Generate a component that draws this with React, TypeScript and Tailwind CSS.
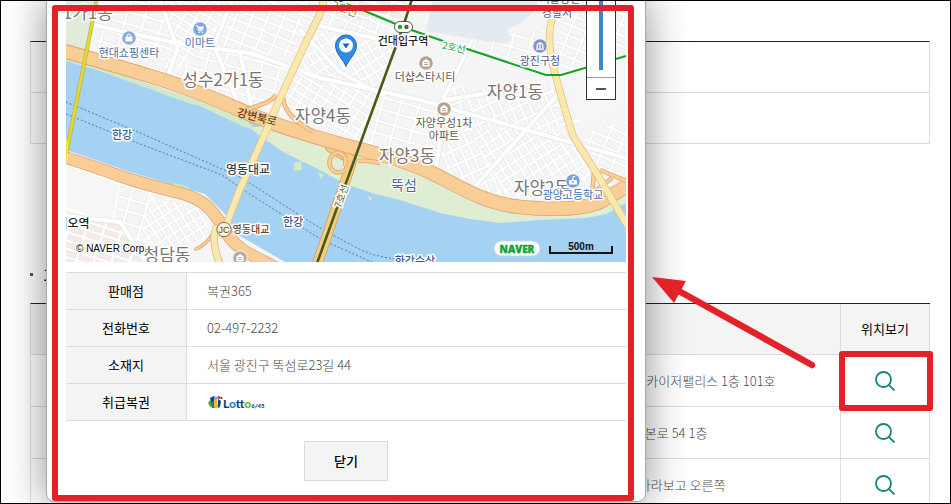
import type { ReactNode } from "react";

const sans = "font-['Noto_Sans_CJK_KR','Noto_Sans',sans-serif]";

type LabelProps = {
  x: number;
  y: number;
  size: number;
  children: ReactNode;
  className?: string;
  weight?: number;
  halo?: number;
  transform?: string;
};

function MapLabel({ x, y, size, children, className = "fill-[#5f5a58]", weight = 400, halo = 3, transform }: LabelProps) {
  return (
    <text
      x={x}
      y={y}
      fontSize={size}
      fontWeight={weight}
      textAnchor="middle"
      stroke="#fff"
      strokeWidth={halo}
      strokeLinejoin="round"
      paintOrder="stroke"
      transform={transform}
      className={className}
    >
      {children}
    </text>
  );
}

function Streets({ id, angle, w, h, tint = "#f5f5f5" }: { id: string; angle: number; w: number; h: number; tint?: string }) {
  return (
    <pattern id={id} width={w} height={h} patternUnits="userSpaceOnUse" patternTransform={`rotate(${angle})`}>
      <rect width={w} height={h} fill="#fff" />
      <rect x="1.5" y="1.5" width={w - 3} height={h - 3} fill={tint} stroke="#e8e8e8" strokeWidth="0.7" />
    </pattern>
  );
}

function Road({ d, width, fill, edge }: { d: string; width: number; fill: string; edge: string }) {
  return (
    <g fill="none" strokeLinecap="round" strokeLinejoin="round">
      <path d={d} stroke={edge} strokeWidth={width + 1.5} />
      <path d={d} stroke={fill} strokeWidth={width} />
    </g>
  );
}

function Poi({ x, y, color, kind }: { x: number; y: number; color: string; kind: "bag" | "cart" | "home" | "hall" | "school" }) {
  return (
    <g transform={`translate(${x} ${y})`}>
      <circle r="7.5" fill="#fff" />
      <circle r="6.8" fill={color} />
      {kind === "bag" && (
        <>
          <rect x="-3.5" y="-1.5" width="7" height="5" rx="0.6" fill="#fff" />
          <path d="M-1.8-1.5v-.6a1.8 1.8 0 0 1 3.6 0v.6" fill="none" stroke="#fff" />
        </>
      )}
      {kind === "cart" && (
        <>
          <path d="M-4.2-3.4h1.6l1.2 5.2h4.2" fill="none" stroke="#fff" />
          <path d="M-2-2.4h6l-.9 3.1h-4.4z" fill="#fff" />
          <circle cx="-.7" cy="3.5" r=".8" fill="#fff" />
          <circle cx="2.4" cy="3.5" r=".8" fill="#fff" />
        </>
      )}
      {kind === "home" && (
        <>
          <path d="M-3.6 3.6v-5.2l3.6-2.4 3.6 2.4v5.2z" fill="#fff" />
          <path d="M-1.8-.4h3.6M-1.8 1.5h3.6" stroke={color} />
        </>
      )}
      {kind === "hall" && (
        <>
          <path d="M-4-1.6l4-2.4 4 2.4zM-4 2.4h8v1.3h-8z" fill="#fff" />
          <path d="M-2.8-1.2v3.6M0-1.2v3.6M2.8-1.2v3.6" stroke="#fff" strokeWidth="1.3" />
        </>
      )}
      {kind === "school" && (
        <>
          <path d="M-4 3.6v-4.4h2.6l1.4-1.4 1.4 1.4h2.6v4.4z" fill="#fff" />
          <path d="M0-2v-2.5h2.2" fill="none" stroke="#fff" />
          <circle cy="1" r="1" fill={color} />
        </>
      )}
    </g>
  );
}

const northHighway =
  "M60 50C90 58 120 67 150 76S220 101 245 112S300 133 340 144S410 161 440 177S490 204 520 207S580 210 600 202L632 183";
const southHighway = "M60 156C85 163 100 169 120 176S160 188 180 193S212 207 224 229S255 256 280 270";
const yeongdong = "M325 -5L320 14L306 42L277 105L264 136L240 189L225 228";
const eastRoad = "M553 -4L552 18C548 34 549 46 553 66C560 92 566 114 573 136L597 174L630 230";

function StreetMap() {
  return (
    <svg
      viewBox="66 0 560 262"
      preserveAspectRatio="xMidYMid slice"
      role="img"
      aria-label="판매점 위치 지도"
      className="block h-[262px] w-full"
    >
      <defs>
        <Streets id="st-a" angle={22} w={15} h={10} />
        <Streets id="st-b" angle={-24} w={9} h={14} />
        <Streets id="st-c" angle={32} w={11} h={8} />
        <Streets id="st-d" angle={58} w={10} h={8} />
        <Streets id="st-e" angle={16} w={18} h={12} />
        <Streets id="st-p" angle={18} w={17} h={8} tint="#f7e9e4" />
      </defs>

      <rect x="66" width="560" height="262" fill="#f5f5f5" />

      <g>
        <path d="M96 0h60l14 34-6 46-74-24z" fill="url(#st-e)" />
        <path d="M156 0h76l-10 40-58 38 6-44z" fill="url(#st-c)" />
        <path d="M232 0h88l-24 58-80-12z" fill="url(#st-a)" />
        <path d="M164 80l50-36 80 18-26 46-24 2z" fill="url(#st-e)" />
        <path d="M322 0h92l-16 44-90-14z" fill="url(#st-a)" />
        <path d="M350 0h58l-8 20-60 0z" fill="url(#st-p)" />
        <path d="M306 32l92 12-14 44-96-24z" fill="url(#st-d)" />
        <path d="M288 64l96 24-22 54-84-32z" fill="url(#st-c)" />
        <path d="M380 94l62 14-8 54-66-18z" fill="url(#st-e)" />
        <path d="M442 86l108-2 20 46-58 74-70-30z" fill="url(#st-b)" />
        <path d="M470 130l100 0 20 46-30 28-50-2z" fill="url(#st-d)" />
        <path d="M455 36l95-6v44l-60-16z" fill="url(#st-e)" />
        <path d="M556 0h70v52l-68 20z" fill="url(#st-a)" />
        <path d="M582 134l44-14v54l-20 4z" fill="url(#st-a)" />
        <path d="M66 164l54 20-8 40-46-16z" fill="#f6f6f6" stroke="#fff" strokeWidth="2" />
        <path d="M120 184l74 22-10 34-30 22h-22l-16-40z" fill="url(#st-e)" />
        <path d="M150 196l52 14 8 24-30 20-40-16z" fill="url(#st-d)" />
        <path d="M66 214l60 12 22 36h-82z" fill="url(#st-p)" />
      </g>

      <g fill="none" stroke="#e6e6e6" strokeWidth="5.5">
        <path d="M94 25L180 44L250 53L320 78L420 100L626 158" />
        <path d="M240 52L252 110M180 40L166 82M160 0L178 50M232 0L214 46L240 108" />
        <path d="M300 30L340 72L384 96M320 26L400 44M440 106L472 40M436 168L446 100L540 84" />
        <path d="M560 125L626 108M470 192L560 92M66 216L120 222L146 262" />
      </g>
      <g fill="none" stroke="#fff" strokeWidth="4">
        <path d="M94 25L180 44L250 53L320 78L420 100L626 158" />
        <path d="M240 52L252 110M180 40L166 82M160 0L178 50M232 0L214 46L240 108" />
        <path d="M300 30L340 72L384 96M320 26L400 44M440 106L472 40M436 168L446 100L540 84" />
        <path d="M560 125L626 108M470 192L560 92M66 216L120 222L146 262" />
      </g>

      <path d="M566 74L626 62v48l-46 16z" fill="#f6f6f6" />
      <path d="M433 0L426 31L455 36L505 44L512 38L507 30L522 22L536 10L538 0z" fill="#e4eaf1" />
      <path d="M66 0h29l-9 56-20-6z" fill="#e0ecd9" />

      <path
        d="M66 58L100 68L190 98L245 120L262 126L340 150L440 184L510 214L590 212L626 196V262H285L240 236L224 213L205 194L170 184L130 172L90 158L66 150z"
        fill="#a5d1f2"
      />
      <path
        d="M262 126L340 150L440 182L510 212L590 210L626 192V203L606 214L586 218L540 220L500 223L470 219L440 213L400 200L375 194L345 184L318 169L285 153L263 138L250 128z"
        fill="#dfedd3"
      />
      <path
        d="M66 58L100 68L190 98L245 120L258 130L244 127L200 106L188 103L100 71L66 61zM174 183l8 2 8 3 0 3-18-5zM294 163l7-2 1 9-8 1zM318 172l6 3-4 4zM368 196l4 2-2 4zM283 152l5-1 1 4z"
        fill="#d3e8c8"
      />

      <g fill="none" stroke="#55799f" strokeWidth="1" strokeDasharray="2 2">
        <path d="M66 102L145 135L240 177L320 228L355 247Q376 258 400 259" />
        <path d="M66 114L135 142L222 175L245 191L322 240L372 262" />
      </g>

      <Road d="M330 147L352 160L347 176L316 268" width={9} fill="#f3cd83" edge="#d79e5b" />
      <Road d={northHighway} width={13} fill="#f9cd96" edge="#dfa267" />
      <g fill="none" stroke="#dfa267" strokeWidth="4.5">
        <path d="M276 95C270 104 258 105 246 110M283 98C284 112 296 122 312 131" />
        <path d="M345 170C334 178 326 165 331 157S348 153 345 166" />
        <path d="M358 161Q366 160 380 163" />
        <path d="M594 172L592 196M600 170L626 181M594 192L612 178" />
      </g>
      <g fill="none" stroke="#f9cd96" strokeWidth="3">
        <path d="M276 95C270 104 258 105 246 110M283 98C284 112 296 122 312 131" />
        <path d="M345 170C334 178 326 165 331 157S348 153 345 166" />
        <path d="M358 161Q366 160 380 163" />
        <path d="M594 172L592 196M600 170L626 181M594 192L612 178" />
      </g>
      <Road d="M196 249Q212 242 218 222" width={2} fill="#f9cd96" edge="#dfa267" />
      <Road d={southHighway} width={11} fill="#f9cd96" edge="#dfa267" />
      <Road d="M216 228C212 240 214 252 222 268" width={6} fill="#fae8ae" edge="#dcbc77" />
      <Road d={yeongdong} width={6} fill="#fbe8ac" edge="#e0c283" />
      <Road d={eastRoad} width={6} fill="#fbe8ac" edge="#e0c283" />

      <path d="M97 -2L86 54L66 155" fill="none" stroke="#b9bd47" strokeWidth="4" />
      <path d="M97 -2L86 54L66 155" fill="none" stroke="#e9d735" strokeWidth="2.4" />
      <path d="M66 140v20" stroke="#f3e63a" strokeWidth="4" />
      <path d="M413 -4L403 27L363 136L316 266" fill="none" stroke="#495b16" strokeWidth="2.6" />
      <path d="M330 -2L360 9L403 27L440 40L546 75H561L626 56" fill="none" stroke="#13a326" strokeWidth="2" />

      <Poi x={129} y={38} color="#8cabdb" kind="bag" />
      <Poi x={200} y={29} color="#7ea6de" kind="cart" />
      <Poi x={426} y={63} color="#b5a18d" kind="home" />
      <Poi x={444} y={109} color="#b5a18d" kind="home" />
      <Poi x={540} y={46} color="#8593c5" kind="hall" />
      <Poi x={240} y={258} color="#b5aaa2" kind="home" />

      <g className={sans}>
        <MapLabel x={80} y={19} size={17} className="fill-[#7b7472]">수1가1동</MapLabel>
        <MapLabel x={129} y={57} size={11} className="fill-[#4d6d9d]">현대쇼핑센타</MapLabel>
        <MapLabel x={200} y={47} size={11} className="fill-[#4d73aa]">이마트</MapLabel>
        <MapLabel x={223} y={86} size={17} className="fill-[#7b7472]">성수2가1동</MapLabel>
        <MapLabel x={323} y={122} size={17} className="fill-[#7b7472]">자양4동</MapLabel>
        <MapLabel x={407} y={162} size={17} className="fill-[#7b7472]">자양3동</MapLabel>
        <MapLabel x={515} y={98} size={17} className="fill-[#7b7472]">자양1동</MapLabel>
        <MapLabel x={542} y={194} size={17} className="fill-[#7b7472]">자양2동</MapLabel>
        <MapLabel x={167} y={261} size={17} className="fill-[#7b7472]">청담동</MapLabel>
        <Poi x={573} y={181} color="#75a5dc" kind="school" />
        <MapLabel x={573} y={199} size={11} className="fill-[#3d6eae]">광양고등학교</MapLabel>
        <MapLabel x={540} y={65} size={11} className="fill-[#4e5987]">광진구청</MapLabel>
        <MapLabel x={560} y={3} size={11} className="fill-[#4e5987]">서울광진</MapLabel>
        <MapLabel x={557} y={17} size={11} className="fill-[#4e5987]">경찰서</MapLabel>
        <MapLabel x={425} y={81} size={11} className="fill-[#65564c]">더샵스타시티</MapLabel>
        <MapLabel x={444} y={127} size={11} className="fill-[#65564c]">자양우성1차</MapLabel>
        <MapLabel x={444} y={140} size={11} className="fill-[#65564c]">아파트</MapLabel>
        <MapLabel x={403} y={45} size={11} weight={500} className="fill-[#222]">건대입구역</MapLabel>
        <MapLabel x={73} y={228} size={12} weight={500} className="fill-[#222]">미오역</MapLabel>
        <MapLabel x={248} y={174} size={12} weight={500} className="fill-[#39424a]">영동대교</MapLabel>
        <MapLabel x={251} y={233} size={10} weight={500} className="fill-[#64482f]">영동대교</MapLabel>
        <MapLabel x={122} y={139} size={11} weight={500} className="fill-[#35568f]">한강</MapLabel>
        <MapLabel x={293} y={226} size={11} weight={500} className="fill-[#35568f]">한강</MapLabel>
        <MapLabel x={415} y={265} size={11} weight={500} className="fill-[#35568f]">한강수상</MapLabel>
        <MapLabel x={404} y={190} size={14} halo={2} className="fill-[#496d9b]">뚝섬</MapLabel>
        <MapLabel x={345} y={13} size={11} className="fill-[#3e9a50]" transform="rotate(20 345 8)">2호선</MapLabel>
        <MapLabel x={454} y={51} size={10} className="fill-[#23a23b]" transform="rotate(12 454 47)">2호선</MapLabel>
        <MapLabel x={341} y={200} size={10} className="fill-[#5c691e]" transform="rotate(-71 341 196)">7호선</MapLabel>
        <MapLabel x={257} y={121} size={11} halo={0} weight={500} className="fill-[#6b4217]" transform="rotate(14 257 117)">강변북로</MapLabel>
      </g>

      <g>
        <circle cx="224" cy="229.500" r="7.2" fill="#faf1d6" stroke="#8a6a45" />
        <text x="224" y="233" fontSize="9" textAnchor="middle" className="fill-[#5b432a] font-['Liberation_Sans',sans-serif]">JC</text>
      </g>
      <g>
        <rect x="394.500" y="21.500" width="18" height="11" rx="5.500" fill="#fff" stroke="#555" />
        <circle cx="400" cy="27" r="2.200" fill="#18a330" />
        <circle cx="406.500" cy="27" r="2.200" fill="#5c6417" />
      </g>
      <g>
        <path d="M346 66.500C344 60 335.500 54 335.500 45.500a10.500 10.500 0 0 1 21 0C356.500 54 348 60 346 66.500z" fill="#2f8be6" stroke="#2166ad" />
        <circle cx="346" cy="45.500" r="7" fill="#fff" />
        <path d="M342.500 43.500h7l-3.500 5z" fill="#2266b0" />
      </g>
      <text x="76" y="252" fontSize="10" stroke="#fff" strokeWidth="2" paintOrder="stroke" className="fill-black font-['Liberation_Sans',sans-serif]">
        © NAVER Corp.
      </text>
      <g>
        <rect x="494" y="241" width="46" height="15" rx="7.500" fill="#fff" stroke="#c5d9e6" />
        <text x="517" y="252.500" fontSize="10" fontWeight="900" textAnchor="middle" stroke="#11a63b" strokeWidth="0.4" className="fill-[#11a63b] font-['Open_Sans',sans-serif]">
          NAVER
        </text>
      </g>
      <path d="M550 246v7h62v-7" fill="none" stroke="#111" strokeWidth="2" />
      <text x="581" y="250" fontSize="10" fontWeight="700" textAnchor="middle" className="fill-[#111] font-['Liberation_Sans',sans-serif]">500m</text>
    </svg>
  );
}

function LottoLogo() {
  return (
    <svg viewBox="0 0 60 16" role="img" aria-label="Lotto 6/45" className="h-4 w-[60px]">
      <path d="M1 9L4 5l3 2-3 7z" fill="#4aa83c" />
      <path d="M3 4l4-2 3 4-5 4z" fill="#1d3f86" />
      <path d="M7 2l4 1-1 4-3-1z" fill="#6fb2dc" />
      <path d="M4 10l3-4 2 8H5z" fill="#20806f" />
      <path d="M7 6l3-1 1 8-2 2-2-2z" fill="#e7b63c" />
      <path d="M11 5l3 2-1 6-2 1z" fill="#1d3f86" />
      <circle cx="12" cy="3.500" r="1.600" fill="#d9382f" />
      <circle cx="14.500" cy="4" r="1" fill="#333" />
      <text y="14" fontSize="12" fontWeight="900" className="font-['Lato',sans-serif]">
        <tspan x="16" fill="#17427f">L</tspan>
        <tspan fill="#2089c8">o</tspan>
        <tspan fill="#17427f">tt</tspan>
        <tspan fill="#7fb52b">o</tspan>
        <tspan fill="#17427f" fontSize="6">6/45</tspan>
      </text>
    </svg>
  );
}

function SearchIcon() {
  return (
    <svg viewBox="0 0 20 20" fill="none" stroke="#108578" strokeWidth="1.800" className="size-5" aria-hidden="true">
      <circle cx="8.500" cy="8.500" r="7.500" />
      <path d="M13.800 13.800L19.500 19.500" />
    </svg>
  );
}

const details: { label: string; value: ReactNode }[] = [
  { label: "판매점", value: "복권365" },
  { label: "전화번호", value: "02-497-2232" },
  { label: "소재지", value: "서울 광진구 뚝섬로23길 44" },
  { label: "취급복권", value: <LottoLogo /> },
];

const addresses = [
  "서울특별시 영등포구 도림로 2 한화카이저팰리스 1층 101호",
  "경기 고양시 덕양구 원본로 54 1층",
  "부산 동구 부산역정문을 바라보고 오른쪽",
];

function StoreDialog() {
  return (
    <section
      role="dialog"
      aria-label="판매점 상세 정보"
      className="absolute -top-0.5 left-[45px] w-[600px] rounded-b-lg border border-[#a8a8a8] bg-white px-[19px] pb-5 shadow-[0_0_40px_rgba(0,0,0,0.45)]"
    >
      <div className="relative">
        <StreetMap />
        <div className="absolute top-0 right-[10px] flex h-[100px] w-[30px] flex-col border border-[#333] bg-white">
          <div className="flex h-[76px] justify-center">
            <div className="h-[69px] w-1 bg-[#4183cf]" />
          </div>
          <button type="button" aria-label="지도 축소" className="flex flex-1 items-center justify-center border-t border-[#999]">
            <span className="h-[2px] w-[10px] bg-[#555]" />
          </button>
        </div>
      </div>
      <table className="mt-[10px] w-full border-separate border-spacing-0 border-t border-[#dcdcdc] text-[13px] leading-5">
        <tbody>
          {details.map((row) => (
            <tr key={row.label} className="h-[37px]">
              <th scope="row" className="w-[121px] border-r border-b border-[#dcdcdc] bg-[#f4f4f4] p-0 text-center font-normal text-black">
                {row.label}
              </th>
              <td className="border-b border-[#dcdcdc] py-0 pl-5 font-light text-[#4a4a4a]">{row.value}</td>
            </tr>
          ))}
        </tbody>
      </table>
      <div className="mt-5 flex justify-center">
        <button type="button" className="h-10 w-[84px] border border-[#dcdcdc] bg-[#f4f4f4] text-[13px] font-medium text-black">
          닫기
        </button>
      </div>
    </section>
  );
}

export default function App() {
  return (
    <div className={`relative h-screen overflow-hidden border border-black bg-white pr-5 pl-[29px] ${sans}`}>
      <div className="mt-10 h-[103px] border border-t-[#222] border-[#dcdcdc]">
        <div className="h-[51px] border-b border-[#dcdcdc]" />
      </div>
      <h2 className="mt-[118px] flex h-6 items-center gap-[10px] text-base font-medium">
        <span className="size-[3px] bg-[#555]" />
        1등 배출점
      </h2>
      <table className="mt-[17px] w-full table-fixed border-separate border-spacing-0 border-t border-l border-t-[#222] border-l-[#dcdcdc] text-[13px] leading-5">
        <thead>
          <tr className="h-[51px] bg-[#f4f4f4]">
            <th scope="col" className="w-[60px] border-r border-b border-[#dcdcdc] font-normal">번호</th>
            <th scope="col" className="w-[225px] border-r border-b border-[#dcdcdc] font-normal">상호명</th>
            <th scope="col" className="w-[80px] border-r border-b border-[#dcdcdc] font-normal">구분</th>
            <th scope="col" className="border-r border-b border-[#dcdcdc] font-normal">소재지</th>
            <th scope="col" className="w-[89px] border-r border-b border-[#dcdcdc] font-normal text-black">위치보기</th>
          </tr>
        </thead>
        <tbody>
          {addresses.map((address, i) => (
            <tr key={address} className="h-[52px]">
              <td className="border-r border-b border-[#dcdcdc] text-center font-light">{i + 1}</td>
              <td className="border-r border-b border-[#dcdcdc]" />
              <td className="border-r border-b border-[#dcdcdc] text-center font-light">자동</td>
              <td className="border-r border-b border-[#dcdcdc] p-0 text-center font-light whitespace-nowrap text-[#4a4a4a]">{address}</td>
              <td className="border-r border-b border-[#dcdcdc] p-0">
                <button type="button" aria-label="위치보기" className="flex w-full justify-center">
                  <SearchIcon />
                </button>
              </td>
            </tr>
          ))}
        </tbody>
      </table>

      <StoreDialog />

      <div className="pointer-events-none absolute top-1 left-[51px] h-[496px] w-[582px] rounded-[3px] border-6 border-[#e32128]" />
      <div className="pointer-events-none absolute top-[350px] right-[17px] h-[60px] w-[94px] rounded-[3px] border-6 border-[#e32128]" />
      <svg viewBox="0 0 166 94" className="pointer-events-none absolute top-[275px] left-[650px] h-[94px] w-[166px]" aria-hidden="true">
        <path d="M26 14L161 89" stroke="#e32128" strokeWidth="6.500" strokeLinecap="round" />
        <path d="M1 1L35 5L23 27z" fill="#e32128" />
      </svg>
    </div>
  );
}
